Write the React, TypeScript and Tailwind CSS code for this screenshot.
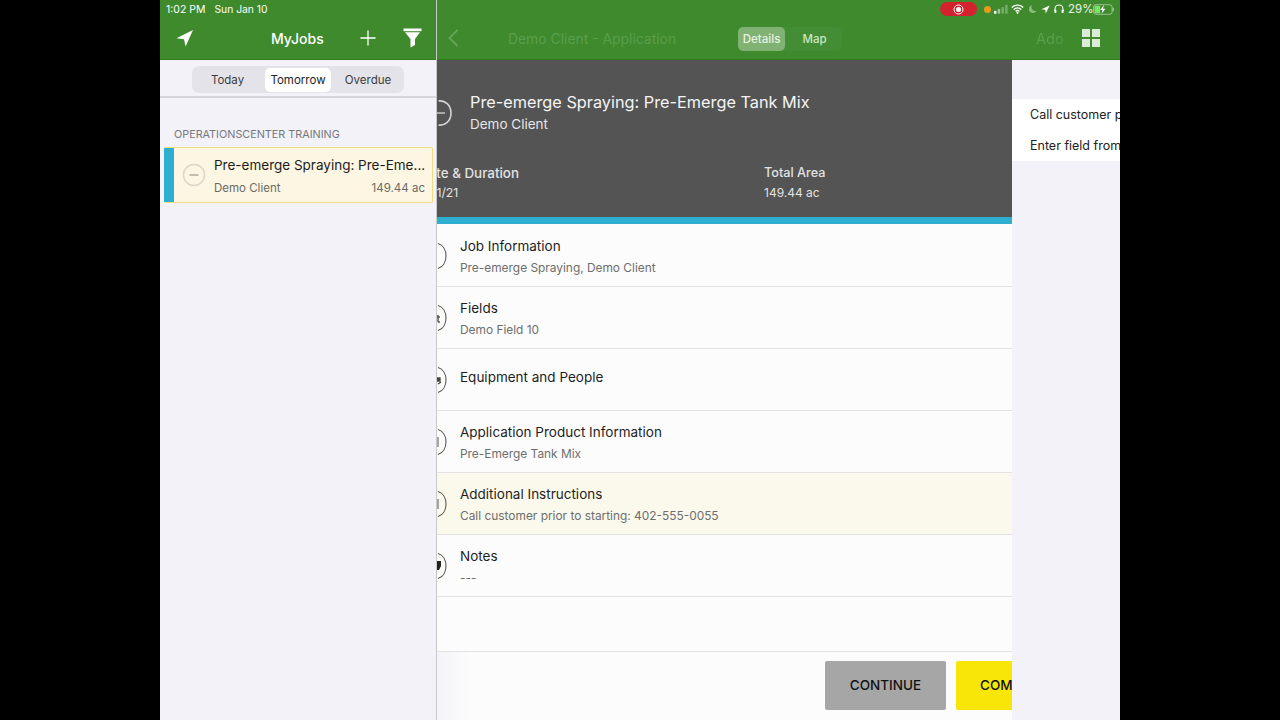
import React from "react";

const rows = [
  { t: "Job Information", s: "Pre-emerge Spraying, Demo Client", g: "" },
  { t: "Fields", s: "Demo Field 10", g: "t" },
  { t: "Equipment and People", s: "", g: "s" },
  { t: "Application Product Information", s: "Pre-Emerge Tank Mix", g: "l" },
  { t: "Additional Instructions", s: "Call customer prior to starting: 402-555-0055", g: "l", hl: true },
  { t: "Notes", s: "---", g: "p" },
];

function ClippedCircle({ g }: { g: string }) {
  return (
    <svg width="10" height="28" viewBox="0 0 10 28" className="shrink-0">
      <path d="M1 1.5 C6 3 9 8 9 14 C9 20 6 25 1 26.5" fill="none" stroke="#555" strokeWidth="1.1" />
      {g === "t" && <path d="M1 11 V18 M0 13 H3 M1 18 H3" stroke="#555" strokeWidth="1.4" fill="none" />}
      {g === "s" && <path d="M0 12 H3 V15 H0 Z M1 18 L4 16" stroke="#444" strokeWidth="1.3" fill="#444" />}
      {g === "l" && <path d="M1 9 V19" stroke="#777" strokeWidth="1.3" fill="none" />}
      {g === "p" && <path d="M0 9 H4 V14 L2 18 H0 Z" fill="#222" />}
    </svg>
  );
}

function StatusIcons() {
  return (
    <div className="flex items-center h-[18px] pr-[5px] justify-end text-[11.5px] leading-none text-white/90">
      <div className="w-[37px] h-[14px] rounded-full bg-[#d3222e] flex items-center justify-center">
        <svg width="11" height="11" viewBox="0 0 11 11">
          <circle cx="5.5" cy="5.5" r="4.5" fill="none" stroke="#fff" strokeWidth="1" />
          <circle cx="5.5" cy="5.5" r="2.5" fill="#fff" />
        </svg>
      </div>
      <div className="ml-[7px] w-[7px] h-[7px] rounded-full bg-[#e89a1c]" />
      <svg width="14" height="10" viewBox="0 0 15 10" className="ml-[3px]">
        <rect x="0" y="7" width="2.6" height="3" fill="#fff" />
        <rect x="4" y="5" width="2.6" height="5" fill="#fff" opacity=".5" />
        <rect x="8" y="3" width="2.6" height="7" fill="#fff" opacity=".3" />
        <rect x="12" y="0.5" width="2.6" height="9.5" fill="#fff" opacity=".3" />
      </svg>
      <svg width="13" height="10" viewBox="0 0 13 10" className="ml-[3px]">
        <path d="M0.8 3.4 C4 0.4 9 0.4 12.2 3.4 M2.7 5.4 C4.9 3.4 8.1 3.4 10.3 5.4 M4.6 7.3 C5.7 6.3 7.3 6.3 8.4 7.3" fill="none" stroke="#fff" strokeWidth="1.4" />
        <circle cx="6.5" cy="8.8" r="1.1" fill="#fff" />
      </svg>
      <svg width="8" height="10" viewBox="0 0 9 10" className="ml-[5px]">
        <path d="M3.5 0.5 A4.6 4.6 0 1 0 8.6 7 A4.4 4.4 0 0 1 3.5 0.5 Z" fill="#fff" opacity=".4" />
      </svg>
      <svg width="9" height="9" viewBox="0 0 9 9" className="ml-[4px]">
        <path d="M8.6 0.4 L0.4 4.2 L4.2 4.8 L4.8 8.6 Z" fill="#fff" />
      </svg>
      <svg width="10" height="10" viewBox="0 0 10 10" className="ml-[4px]">
        <path d="M1 7 V5 A4 4 0 0 1 9 5 V7" fill="none" stroke="#fff" strokeWidth="1.1" />
        <rect x="0.4" y="5.6" width="2" height="3.4" rx=".8" fill="#fff" />
        <rect x="7.6" y="5.6" width="2" height="3.4" rx=".8" fill="#fff" />
      </svg>
      <span className="ml-[4px] w-[24px] pt-[2px]">29%</span>
      <svg width="22" height="11" viewBox="0 0 23 11" className="ml-[1px]">
        <rect x="0.5" y="0.5" width="19.5" height="10" rx="2.5" fill="none" stroke="#fff" strokeOpacity=".5" />
        <rect x="1.5" y="1.5" width="6" height="8" rx="1.2" fill="#7be06a" />
        <path d="M21.2 3.8 V7.2" stroke="#fff" strokeOpacity=".5" strokeWidth="1.2" />
        <path d="M11.5 0.8 L7.5 6 H10 L8.8 10.2 L13 4.8 H10.5 Z" fill="#fff" />
      </svg>
    </div>
  );
}

export default function App() {
  return (
    <div className="w-[1280px] h-[720px] bg-black flex justify-center overflow-hidden font-['Inter','Liberation_Sans',sans-serif]">
      <div className="w-[960px] h-[720px] flex">
        {/* Left pane */}
        <div className="w-[276px] shrink-0 flex flex-col bg-[#f2f2f8]">
          <div className="h-[60px] bg-[#3e8a2d] border-b border-[#2f7d20] text-white flex flex-col shrink-0">
            <div className="h-[18px] pl-[6px] pt-[1px] flex items-center text-[10.5px]">
              <span>1:02 PM</span>
              <span className="ml-[9px] text-[10.3px]">Sun Jan 10</span>
            </div>
            <div className="flex-1 flex items-center pb-[1px] pl-[16px]">
              <svg width="18" height="18" viewBox="0 0 18 18" className="shrink-0">
                <path d="M17 1 L0.5 9.2 L8 10.2 L9.6 17.5 Z" fill="#fff" />
              </svg>
              <span className="ml-[77px] text-[14px] font-medium w-[54px] whitespace-nowrap">MyJobs</span>
              <svg width="16" height="16" viewBox="0 0 16 16" className="ml-[35px] shrink-0">
                <path d="M8 0.5 V15.5 M0.5 8 H15.5" stroke="#fff" strokeWidth="1.3" />
              </svg>
              <svg width="19" height="20" viewBox="0 0 19 20" className="ml-[27px] shrink-0">
                <path d="M0.5 0.5 H18.5 V3.2 H0.5 Z" fill="#fff" />
                <path d="M2 4.2 H17 L12 11 V17 L7.5 19.5 V11 Z" fill="#fff" />
              </svg>
            </div>
          </div>
          <div className="h-[38px] shrink-0 border-b-2 border-[#d6d6da] flex items-start justify-center pt-[6px]">
            <div className="w-[212px] h-[27px] rounded-[7px] bg-[#e3e3e9] flex items-center text-[11.5px] text-[#3c3c3c]">
              <div className="w-[71px] text-center pt-[2px]">Today</div>
              <div className="w-[66px] h-[24px] ml-[2px] pt-[2px] rounded-[5px] bg-white flex items-center justify-center text-[#222]">Tomorrow</div>
              <div className="flex-1 text-center pl-[1px] pt-[2px]">Overdue</div>
            </div>
          </div>
          <div className="pl-[14px] pt-[30px] text-[10.8px] leading-[13px] text-[#77777c] whitespace-nowrap">
            OPERATIONSCENTER TRAINING
          </div>
          <div className="ml-[4px] mt-[6px] w-[269px] h-[56px] border border-l-0 border-[#f0dc7c] rounded-[2px] bg-[#fdf6e3] flex">
            <div className="w-[10px] bg-[#2fafcf] shrink-0" />
            <div className="w-[40px] shrink-0 flex items-center justify-center">
              <svg width="24" height="24" viewBox="0 0 24 24">
                <circle cx="12" cy="12" r="10.5" fill="none" stroke="#d9d5c8" strokeWidth="1.4" />
                <path d="M7.5 12 H16.5" stroke="#a8a49a" strokeWidth="1.4" />
              </svg>
            </div>
            <div className="flex-1 min-w-0 pr-[7px] pt-[8px]">
              <div className="text-[13.5px] leading-[18px] text-[#1c1c1c] whitespace-nowrap">Pre-emerge Spraying: Pre-Eme...</div>
              <div className="flex justify-between text-[11.5px] leading-[14px] mt-[7px] text-[#6a6a66]">
                <span>Demo Client</span>
                <span>149.44 ac</span>
              </div>
            </div>
          </div>
        </div>

        <div className="w-px bg-[#c9c9cd] shrink-0" />

        {/* Right side */}
        <div className="flex-1 min-w-0 flex flex-col">
          <div className="h-[60px] bg-[#3e8a2d] border-b border-[#2f7d20] flex flex-col shrink-0">
            <StatusIcons />
            <div className="flex-1 flex items-center pb-[1px] pl-[11px]">
              <svg width="11" height="18" viewBox="0 0 11 18" className="shrink-0">
                <path d="M9.5 1 L1.5 9 L9.5 17" fill="none" stroke="#68a55b" strokeWidth="1.8" />
              </svg>
              <span className="ml-[49px] w-[230px] pt-[2px] text-[13.9px] text-[#5a9e4c] whitespace-nowrap">Demo Client - Application</span>
              <div className="w-[104px] h-[24px] mt-[1px] rounded-[6px] bg-[#438e34] flex items-center text-[11.5px] font-medium">
                <div className="w-[49px] h-[24px] pt-[2px] rounded-[5px] bg-[#80b274] text-[#e8f2e4] flex items-center justify-center">Details</div>
                <div className="w-[59px] pt-[2px] pl-[2px] text-center text-[#cfe3c9]">Map</div>
              </div>
              <span className="ml-[195px] w-[45px] pt-[2px] text-[14.5px] -translate-x-[1px] text-transparent bg-gradient-to-r from-[#5fa251] via-[#5a9e4c] to-[#3e8a2d] bg-clip-text whitespace-nowrap">Ado</span>
              <div className="grid grid-cols-2 gap-[2px] w-[18px] shrink-0">
                <div className="h-[8px] bg-[#dcebd8]" />
                <div className="h-[8px] bg-[#dcebd8]" />
                <div className="h-[8px] bg-[#dcebd8]" />
                <div className="h-[8px] bg-[#dcebd8]" />
              </div>
            </div>
          </div>

          <div className="flex-1 flex min-h-0">
            {/* Middle sheet */}
            <div className="w-[575px] shrink-0 flex flex-col overflow-hidden bg-[#fcfcfc]">
              <div className="h-[157px] bg-[#545454] text-white shrink-0">
                <div className="flex items-start pt-[32px]">
                  <svg width="33" height="28" viewBox="0 0 33 28" className="shrink-0 mt-[7px]">
                    <path d="M1.5 2 C8 1 14 6 14 14 C14 22 8 27 1.5 26" fill="none" stroke="#d5d5d5" strokeWidth="1.6" />
                    <path d="M0 14 H8" stroke="#cfcfcf" strokeWidth="1.4" />
                  </svg>
                  <div>
                    <div className="text-[16.3px] leading-[20px] text-[#f4f4f4] whitespace-nowrap">Pre-emerge Spraying: Pre-Emerge Tank Mix</div>
                    <div className="text-[13.5px] leading-[18px] mt-[3px] text-[#e6e6e6]">Demo Client</div>
                  </div>
                </div>
                <div className="flex pt-[32px]">
                  <div className="w-[327px] shrink-0 overflow-hidden">
                    <div className="-ml-[18px]">
                      <div className="text-[13.4px] leading-[16px] font-medium text-[#e2e2e2] whitespace-nowrap">Date &amp; Duration</div>
                      <div className="text-[12.3px] leading-[16px] mt-[4px] ml-[3px] text-[#e2e2e2] whitespace-nowrap">1/11/21</div>
                    </div>
                  </div>
                  <div>
                    <div className="text-[12.7px] leading-[16px] font-medium text-[#e2e2e2]">Total Area</div>
                    <div className="text-[12px] leading-[16px] mt-[4px] text-[#e2e2e2]">149.44 ac</div>
                  </div>
                </div>
              </div>
              <div className="h-[7px] bg-[#2fafcf] shrink-0" />
              <div className="flex-1 min-h-0 pt-[1px]">
                {rows.map((r) => (
                  <div key={r.t} className={`h-[62px] flex items-center border-b border-[#e3e3e3] ${r.hl ? "bg-[#fbf9ec]" : ""}`}>
                    <ClippedCircle g={r.g} />
                    <div className="ml-[13px] pt-[1px]">
                      <div className="text-[13.5px] leading-[17px] text-[#1e1e1e]">{r.t}</div>
                      {r.s && <div className="text-[11.9px] leading-[15px] mt-[5px] text-[#6e6e6e]">{r.s}</div>}
                      {!r.s && <div className="h-[5px]" />}
                    </div>
                  </div>
                ))}
              </div>
              <div className="h-[69px] shrink-0 border-t border-[#e3e3e3] flex items-start pt-[9px] pl-[388px] bg-gradient-to-r from-[#f4f4f9] via-[#fcfcfc] via-[6%] to-[#fcfcfc]">
                <div className="w-[121px] h-[49px] shrink-0 bg-[#a6a6a6] rounded-[2px] flex items-center justify-center text-[13.5px] font-medium text-[#111]">CONTINUE</div>
                <div className="ml-[10px] w-[121px] h-[49px] shrink-0 bg-[#f7e607] rounded-[2px] flex items-center pl-[24px] text-[13.5px] font-medium text-[#111]">COMPLETE</div>
              </div>
            </div>

            {/* Right pane */}
            <div className="flex-1 min-w-0 bg-[#f2f2f8] overflow-hidden pt-[39px]">
              <div className="bg-white h-[62px] pl-[18px] flex flex-col justify-center gap-[13px] text-[12.5px] leading-[18px] text-[#222] whitespace-nowrap">
                <div>Call customer prior to starting</div>
                <div>Enter field from the north gate</div>
              </div>
            </div>
          </div>
        </div>
      </div>
    </div>
  );
}
